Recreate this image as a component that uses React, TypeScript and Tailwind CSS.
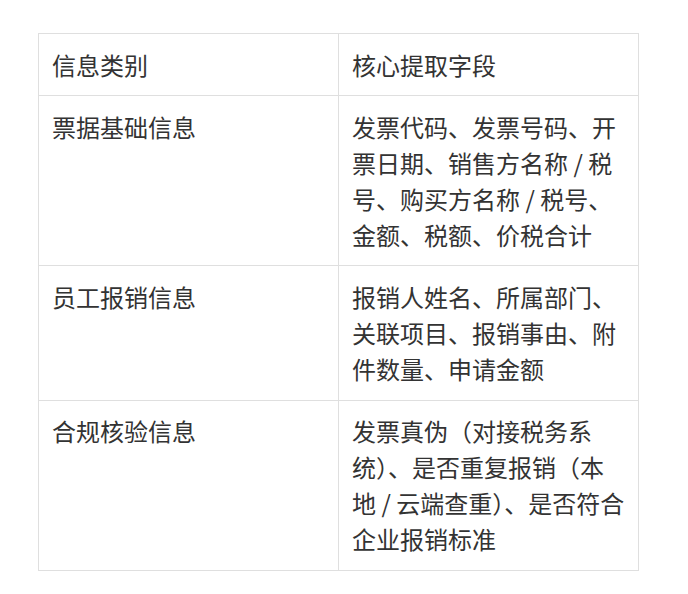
import React from "react";

const rows: [string, string][] = [
  ["票据基础信息", "发票代码、发票号码、开票日期、销售方名称 / 税号、购买方名称 / 税号、金额、税额、价税合计"],
  ["员工报销信息", "报销人姓名、所属部门、关联项目、报销事由、附件数量、申请金额"],
  ["合规核验信息", "发票真伪（对接税务系统）、是否重复报销（本地 / 云端查重）、是否符合企业报销标准"],
];

export default function App() {
  return (
    <div
      className="min-h-[594px] w-[688px] bg-white pt-[33px] pl-[38px]"
      style={{ fontFamily: '"Noto Sans CJK SC", "Noto Sans", sans-serif' }}
    >
      <table className="w-[601px] table-fixed border-collapse text-[24px] leading-[36px] text-[#333333]">
        <tbody>
          <tr>
            <td className="w-[300px] border border-[#dfdfdf] px-[13px] py-[12.6px] align-top">信息类别</td>
            <td className="border border-[#dfdfdf] px-[13px] py-[12.6px] align-top">核心提取字段</td>
          </tr>
          {rows.map(([a, b]) => (
            <tr key={a}>
              <td className="border border-[#dfdfdf] px-[13px] py-[12.6px] align-top">{a}</td>
              <td className="border border-[#dfdfdf] px-[13px] py-[12.6px] align-top">{b}</td>
            </tr>
          ))}
        </tbody>
      </table>
    </div>
  );
}
